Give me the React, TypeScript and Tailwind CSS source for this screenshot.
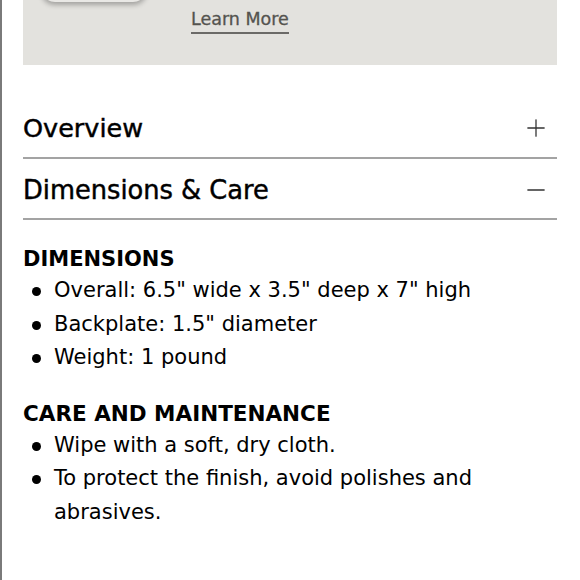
import { Plus, Minus } from 'lucide-react';

const dimensions = [
    'Overall: 6.5" wide x 3.5" deep x 7" high',
    'Backplate: 1.5" diameter',
    'Weight: 1 pound',
];

const care = [
    'Wipe with a soft, dry cloth.',
    'To protect the finish, avoid polishes and abrasives.',
];

function BulletList({ items }: { items: string[] }) {
    return (
        <ul className="flex flex-col">
            {items.map((item) => (
                <li key={item} className="flex items-start leading-[33.5px]">
                    <span className="w-[31px] shrink-0 flex justify-center pr-[4px]">
                        <span className="mt-[13px] h-[9px] w-[9px] rounded-full bg-black" />
                    </span>
                    <span>{item}</span>
                </li>
            ))}
        </ul>
    );
}

export default function App() {
    return (
        <div className="h-[580px] w-[580px] bg-white border-l-2 border-[#7a7a7a] font-['DejaVu_Sans',sans-serif] text-black overflow-hidden">
            <div className="ml-[21px] w-[534px]">

                {/* Product promo panel */}
                <div className="relative h-[65px] bg-[#e3e2de] overflow-hidden">
                    <div className="absolute left-[18px] top-[-12px] h-[14px] w-[106px] rounded-b-full bg-[#e9e8e5] shadow-[0_3px_5px_rgba(0,0,0,0.28)]" />
                    <div className="pl-[168px] pt-[8px]">
                        <a className="inline-block text-[17.5px] text-[#54534f] border-b-2 border-[#6b6a67] leading-[23px] pb-[1px] [-webkit-text-stroke:0.3px_#54534f]">
                            Learn More
                        </a>
                    </div>
                </div>

                {/* Accordion */}
                <div className="mt-[32px] flex h-[62px] items-center justify-between border-b-2 border-[#a3a3a3] pt-[2px]">
                    <span className="text-[25.5px] [-webkit-text-stroke:0.45px_black]">Overview</span>
                    <Plus size={28} strokeWidth={1.1} className="mr-[7px] text-[#333]" />
                </div>
                <div className="flex h-[61px] items-center justify-between border-b-2 border-[#a3a3a3] pt-[3px]">
                    <span className="text-[25.7px] [-webkit-text-stroke:0.45px_black]">Dimensions &amp; Care</span>
                    <Minus size={28} strokeWidth={1.1} className="mr-[7px] text-[#333]" />
                </div>

                {/* Content */}
                <div className="pt-[22px] text-[21px]">
                    <h3 className="font-bold leading-[34px]">DIMENSIONS</h3>
                    <div className="-mt-[2px]">
                        <BulletList items={dimensions} />
                    </div>
                    <h3 className="mt-[22px] font-bold leading-[34px] text-[21.5px]">CARE AND MAINTENANCE</h3>
                    <div className="-mt-[2px]">
                        <BulletList items={care} />
                    </div>
                </div>
            </div>
        </div>
    );
}
